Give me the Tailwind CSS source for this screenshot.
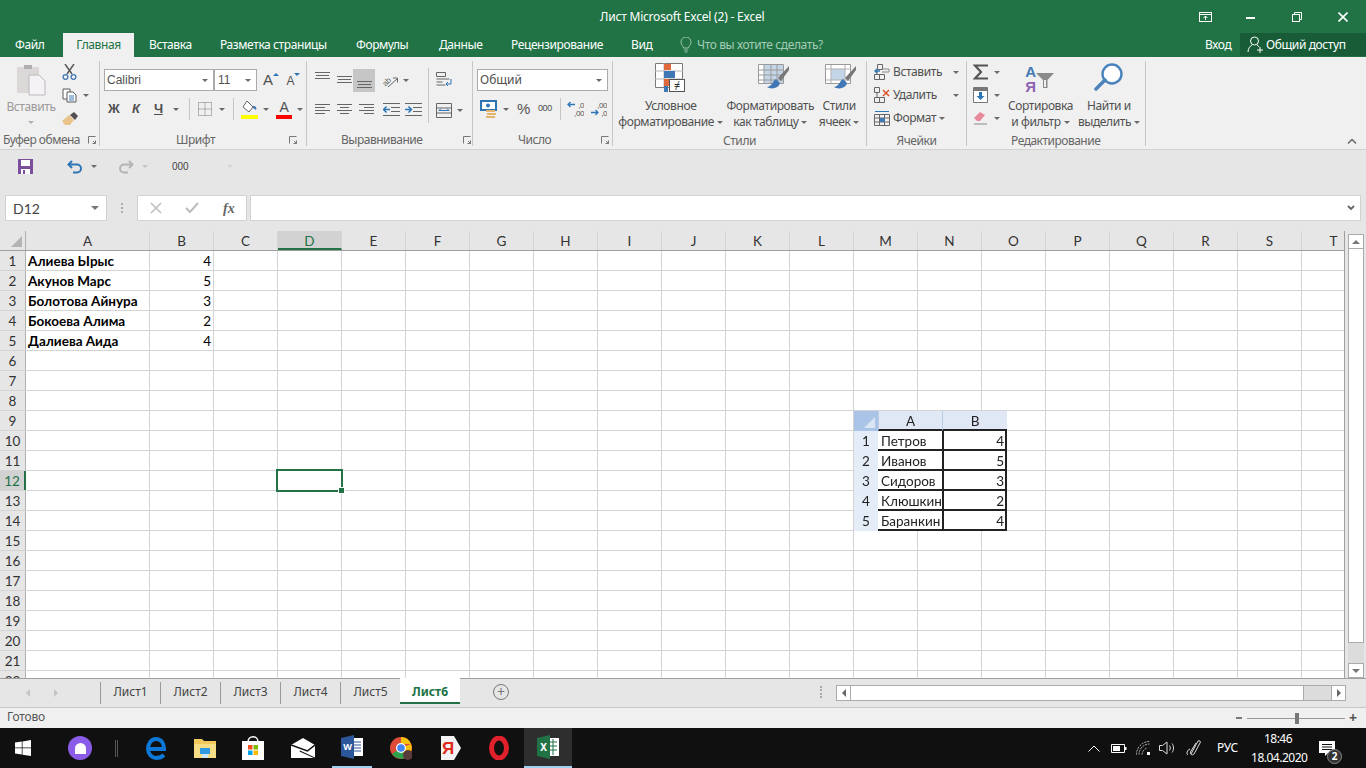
<!DOCTYPE html>
<html lang="ru">
<head>
<meta charset="UTF-8">
<title>Лист Microsoft Excel (2) - Excel</title>
<script src="https://cdn.jsdelivr.net/npm/@tailwindcss/browser@4"></script>
</head>
<body class="w-[1366px] h-[768px] overflow-hidden bg-[#e6e6e6] font-['Noto_Sans',sans-serif] text-[12px] text-[#444]">

<!-- title bar -->
<div class="h-[33px] bg-[#217346] flex items-center text-white relative">
  <div class="w-[1195px] pl-[600px] text-[12px] tracking-[-0.2px]">Лист Microsoft Excel (2) - Excel</div>
  <svg class="w-[16px] h-[12px] ml-[2px]" viewBox="0 0 16 12" fill="none" stroke="#fff"><rect x="2.5" y="1.5" width="12" height="9"/><path d="M2 3.5h13" /><path d="M8.5 9V5M6.5 7l2-2 2 2"/></svg>
  <div class="w-[9px] h-[2px] bg-white ml-[33px] mt-[2px]"></div>
  <svg class="w-[10px] h-[10px] ml-[37px]" viewBox="0 0 10 10" fill="none" stroke="#fff"><rect x="0.5" y="2.5" width="7" height="7"/><path d="M2.5 2.5v-2h7v7h-2"/></svg>
  <svg class="w-[10px] h-[10px] ml-[36px]" viewBox="0 0 10 10" fill="none" stroke="#fff" stroke-width="1.6"><path d="M0.5 0.5l9 9M9.5 0.5l-9 9"/></svg>
</div>

<!-- tabs -->
<div class="h-[24px] bg-[#217346] flex items-stretch text-white text-[12px] tracking-[-0.4px]">
  <span class="ml-[15px] w-[48px] leading-[24px]">Файл</span>
  <span class="w-[71px] bg-[#f0f0f0] text-[#217346] text-center leading-[24px]">Главная</span>
  <span class="ml-[15px] w-[71px] leading-[24px]">Вставка</span>
  <span class="w-[136px] leading-[24px]">Разметка страницы</span>
  <span class="w-[83px] leading-[24px]">Формулы</span>
  <span class="w-[72px] leading-[24px]">Данные</span>
  <span class="w-[120px] leading-[24px]">Рецензирование</span>
  <span class="w-[49px] leading-[24px]">Вид</span>
  <svg class="w-[12px] h-[16px] mt-[4px]" viewBox="0 0 12 16" fill="none" stroke="#9cc4ad"><path d="M3.5 11c0-2-2.500-3-2.500-6a5 5 0 0 1 10 0c0 3-2.500 4-2.500 6z"/><path d="M4 13h4M4.500 15h3"/></svg>
  <span class="ml-[5px] w-[508px] leading-[24px] text-[#a6cbb6]">Что вы хотите сделать?</span>
  <span class="w-[35px] leading-[24px]">Вход</span>
  <div class="w-[126px] bg-[#185c37] flex items-center pl-[7px] gap-[2px] h-[23px]">
    <svg class="w-[17px] h-[17px]" viewBox="0 0 17 17" fill="none" stroke="#fff"><circle cx="7.500" cy="5" r="4"/><path d="M1 16c0-4 2.500-6 4-7M10 9c1 .5 1.500 1 2 2M10 14h6M13 11v6"/></svg>
    <span>Общий доступ</span>
  </div>
</div>

<!-- ribbon -->
<div class="h-[93px] bg-[#f0f0f0] border-b border-[#d2d2d2] flex text-[#505050] tracking-[-0.4px]">

  <!-- clipboard -->
  <div class="w-[100px] h-[85px] mt-[4px] border-r border-[#c6c6c6] flex flex-col pt-px">
    <div class="h-[71px] flex">
      <div class="w-[62px] flex flex-col items-center">
        <svg class="w-[30px] h-[32px] mt-[2px]" viewBox="0 0 30 32"><path d="M1 3h7V1h8v2h7v26H1z" fill="#dcd8d8"/><rect x="8" y="1" width="8" height="4" fill="#b0aeae"/><path d="M13 11h10l6 6v14H13z" fill="#f4f2f4" stroke="#bcb8bc"/></svg>
        <span class="mt-[3px] text-[#9a9a9a] leading-[16px]">Вставить</span>
        <i class="mt-[6px] w-0 h-0 border-x-[3px] border-x-transparent border-t-[3px] border-t-[#b0b0b0]"></i>
      </div>
      <div class="flex flex-col">
        <svg class="w-[15px] h-[16px] mt-[2px]" viewBox="0 0 15 16" fill="none"><path d="M3 0l7 10M12 0L5 10" stroke="#5a5a5a" stroke-width="1.500"/><circle cx="3.500" cy="13" r="2.400" stroke="#3f78b4" stroke-width="1.300"/><circle cx="11.500" cy="13" r="2.400" stroke="#3f78b4" stroke-width="1.300"/></svg>
        <div class="flex items-center mt-[8px]">
          <svg class="w-[16px] h-[15px]" viewBox="0 0 16 15" fill="#fff" stroke="#5a5a5a"><path d="M1 1h7v10H1z"/><path d="M5 4h6l3 3v7H5z"/><path d="M7 8h5M7 10h5M7 12h5" stroke="#3f78b4"/></svg>
          <i class="ml-[5px] w-0 h-0 border-x-[3px] border-x-transparent border-t-[3px] border-t-[#6a6a6a]"></i>
        </div>
        <svg class="w-[17px] h-[14px] mt-[8px]" viewBox="0 0 17 14"><path d="M0 10l7-6 5 5-4 5H3z" fill="#e8c48c"/><path d="M8 4l4-3 4 4-3 4z" fill="#505050"/></svg>
      </div>
    </div>
    <div class="h-[13px] flex items-center pl-[3px] leading-[16px] text-[#666] tracking-[-0.5px]"><span class="w-[85px]">Буфер обмена</span>
      <svg class="w-[8px] h-[8px]" viewBox="0 0 8 8" fill="none" stroke="#777"><path d="M.5 7.500v-7h7M5 5l2.500 2.500M7.500 4.500v3h-3"/></svg>
    </div>
  </div>

  <!-- font -->
  <div class="w-[207px] h-[85px] mt-[4px] border-r border-[#c6c6c6] flex flex-col pt-px">
    <div class="h-[71px] pl-[4px] pt-[7px]">
      <div class="flex items-center h-[22px]">
        <div class="w-[110px] h-[22px] bg-white border border-[#ababab] flex items-center justify-between pl-[2px] pr-[5px] font-['Liberation_Sans'] tracking-normal"><span>Calibri</span><i class="w-0 h-0 border-x-[3px] border-x-transparent border-t-[3px] border-t-[#6a6a6a]"></i></div>
        <div class="w-[43px] h-[22px] bg-white border border-[#ababab] flex items-center justify-between pl-[3px] pr-[5px] font-['Liberation_Sans'] tracking-normal"><span>11</span><i class="w-0 h-0 border-x-[3px] border-x-transparent border-t-[3px] border-t-[#6a6a6a]"></i></div>
        <span class="ml-[6px] text-[15px] leading-[22px] font-['Liberation_Sans'] text-[#505050]">A</span><i class="mb-[11px] w-0 h-0 border-x-[3px] border-x-transparent border-b-[3px] border-b-[#2e75b6]"></i>
        <span class="ml-[8px] text-[12px] leading-[22px] mt-[2px] font-['Liberation_Sans'] text-[#505050]">A</span><i class="mb-[11px] w-0 h-0 border-x-[3px] border-x-transparent border-t-[3px] border-t-[#2e75b6]"></i>
      </div>
      <div class="flex items-center h-[24px] mt-[6px] text-[#505050]">
        <b class="ml-[4px] w-[24px] text-[13px] font-['Liberation_Sans']">Ж</b>
        <b class="w-[22px] text-[13px] italic font-['Liberation_Sans']">К</b>
        <b class="w-[19px] text-[13px] font-['Liberation_Sans'] underline">Ч</b>
        <i class="w-0 h-0 border-x-[3px] border-x-transparent border-t-[3px] border-t-[#6a6a6a]"></i>
        <div class="ml-[10px] w-px h-[22px] bg-[#c6c6c6]"></div>
        <svg class="ml-[8px] w-[14px] h-[14px]" viewBox="0 0 14 14" fill="none" stroke="#777" stroke-dasharray="1 1"><path d="M.5.500h13v13H.500zM7 .5v13M.5 7h13"/></svg>
        <i class="ml-[7px] w-0 h-0 border-x-[3px] border-x-transparent border-t-[3px] border-t-[#6a6a6a]"></i>
        <div class="ml-[8px] w-px h-[22px] bg-[#c6c6c6]"></div>
        <svg class="ml-[7px] w-[17px] h-[19px]" viewBox="0 0 17 19"><path d="M6 1l6 6-4 5-6-5z" fill="#fff" stroke="#666"/><path d="M12 6c3 0 4 2 3 4l-3-2z" fill="#3f78b4"/><rect y="15" width="17" height="4" fill="#ffff00"/></svg>
        <i class="ml-[5px] w-0 h-0 border-x-[3px] border-x-transparent border-t-[3px] border-t-[#6a6a6a]"></i>
        <div class="ml-[7px] w-[16px] flex flex-col items-center"><b class="text-[14px] leading-[15px] font-normal font-['Liberation_Sans']">A</b><span class="w-[16px] h-[4px] bg-[#ff0000]"></span></div>
        <i class="ml-[5px] w-0 h-0 border-x-[3px] border-x-transparent border-t-[3px] border-t-[#6a6a6a]"></i>
      </div>
    </div>
    <div class="h-[13px] flex items-center leading-[16px] text-[#666] tracking-[-0.5px]"><span class="ml-[76px] w-[113px]">Шрифт</span>
      <svg class="w-[8px] h-[8px]" viewBox="0 0 8 8" fill="none" stroke="#777"><path d="M.5 7.500v-7h7M5 5l2.500 2.500M7.500 4.500v3h-3"/></svg>
    </div>
  </div>

  <!-- alignment -->
  <div class="w-[166px] h-[85px] mt-[4px] border-r border-[#c6c6c6] flex flex-col pt-px">
    <div class="h-[71px] flex">
      <div class="w-[121px] pl-[8px] pt-[7px]">
        <div class="flex items-center h-[23px]">
          <svg class="w-[15px] h-[23px]" viewBox="0 0 15 23" stroke="#666"><path d="M0 3.500h15M1 6.500h13M0 9.500h15"/></svg>
          <svg class="ml-[7px] w-[15px] h-[23px]" viewBox="0 0 15 23" stroke="#666"><path d="M0 7.500h15M1 10.500h13M0 13.500h15"/></svg>
          <div class="ml-[1px] w-[22px] h-[23px] bg-[#c6c6c6] flex justify-center"><svg class="w-[15px] h-[23px]" viewBox="0 0 15 23" stroke="#666"><path d="M0 12.500h15M1 15.500h13M0 18.500h15"/></svg></div>
          <svg class="ml-[6px] w-[18px] h-[16px]" viewBox="0 0 18 16" fill="none" stroke="#666"><text x="1" y="11" font-size="8" font-family="Liberation Sans" fill="#666" stroke="none" transform="rotate(-45 6 8)">ab</text><path d="M7 14l9-8M12 5h4.500v4.500"/></svg>
          <i class="ml-[4px] w-0 h-0 border-x-[3px] border-x-transparent border-t-[3px] border-t-[#6a6a6a]"></i>
        </div>
        <div class="flex items-center h-[17px] mt-[9px]">
          <svg class="w-[15px] h-[12px]" viewBox="0 0 15 12" stroke="#666"><path d="M0 .5h15M0 3.500h10M0 6.500h15M0 9.500h10"/></svg>
          <svg class="ml-[7px] w-[15px] h-[12px]" viewBox="0 0 15 12" stroke="#666"><path d="M0 .5h15M3 3.500h9M0 6.500h15M3 9.500h9"/></svg>
          <svg class="ml-[7px] w-[15px] h-[12px]" viewBox="0 0 15 12" stroke="#666"><path d="M0 .5h15M5 3.500h10M0 6.500h15M5 9.500h10"/></svg>
          <svg class="ml-[9px] w-[17px] h-[14px]" viewBox="0 0 17 14" fill="none"><path d="M0 .5h17M8 4.500h9M8 8.500h9M0 12.500h17" stroke="#666"/><path d="M1 6.500h6M3.500 3.500l-3 3 3 3" stroke="#2e75b6" stroke-width="1.500"/></svg>
          <svg class="ml-[5px] w-[17px] h-[14px]" viewBox="0 0 17 14" fill="none"><path d="M0 .5h17M8 4.500h9M8 8.500h9M0 12.500h17" stroke="#666"/><path d="M0 6.500h6M3.500 3.500l3 3-3 3" stroke="#2e75b6" stroke-width="1.500"/></svg>
        </div>
      </div>
      <div class="w-px h-[55px] bg-[#c6c6c6] mt-[6px]"></div>
      <div class="pl-[7px]">
        <svg class="mt-[10px] w-[16px] h-[15px]" viewBox="0 0 16 15" fill="none" stroke="#666"><path d="M.5 .5h9v4h-9zM.5 7h13M.5 10h6M.5 13h9"/><path d="M15 7v5H10M12 10l-2 2 2 2" stroke="#2e75b6"/></svg>
        <div class="flex items-center mt-[16px]">
          <svg class="w-[16px] h-[15px]" viewBox="0 0 16 15" fill="none" stroke="#666"><path d="M.5.500h15v14H.500zM.5 5h15M.5 10h15"/><path d="M3 7.500h10M3 7.500l2-2M13 7.500l-2-2" stroke="#2e75b6"/></svg>
          <i class="ml-[5px] w-0 h-0 border-x-[3px] border-x-transparent border-t-[3px] border-t-[#6a6a6a]"></i>
        </div>
      </div>
    </div>
    <div class="h-[13px] flex items-center leading-[16px] text-[#666] tracking-[-0.5px]"><span class="ml-[34px] w-[122px]">Выравнивание</span>
      <svg class="w-[8px] h-[8px]" viewBox="0 0 8 8" fill="none" stroke="#777"><path d="M.5 7.500v-7h7M5 5l2.500 2.500M7.500 4.500v3h-3"/></svg>
    </div>
  </div>

  <!-- number -->
  <div class="w-[140px] h-[85px] mt-[4px] border-r border-[#c6c6c6] flex flex-col pt-px">
    <div class="h-[71px] pl-[4px] pt-[7px]">
      <div class="w-[131px] h-[22px] bg-white border border-[#ababab] flex items-center justify-between pl-[2px] pr-[5px] tracking-normal"><span>Общий</span><i class="w-0 h-0 border-x-[3px] border-x-transparent border-t-[3px] border-t-[#6a6a6a]"></i></div>
      <div class="flex items-center h-[24px] mt-[6px]">
        <svg class="ml-[3px] w-[18px] h-[18px]" viewBox="0 0 18 18"><rect x="1" y="1" width="15" height="9" fill="#fff" stroke="#2e75b6" stroke-width="2"/><circle cx="8" cy="5.500" r="2" fill="#2e75b6"/><rect x="6" y="10" width="9" height="2" fill="#e5b56e"/><rect x="7" y="13" width="9" height="2" fill="#e5b56e"/><rect x="6" y="16" width="9" height="2" fill="#e5b56e"/></svg>
        <i class="ml-[5px] w-0 h-0 border-x-[3px] border-x-transparent border-t-[3px] border-t-[#6a6a6a]"></i>
        <span class="ml-[8px] w-[21px] text-[15px] font-['Liberation_Sans']">%</span>
        <span class="w-[22px] text-[9px] font-['Liberation_Sans']">000</span>
        <div class="w-px h-[22px] bg-[#c6c6c6]"></div>
        <svg class="ml-[6px] w-[17px] h-[16px]" viewBox="0 0 17 16" fill="none"><text x="17" y="7" text-anchor="end" font-size="8" font-family="Liberation Sans" fill="#555">,0</text><text x="17" y="15" text-anchor="end" font-size="8" font-family="Liberation Sans" fill="#555">,00</text><path d="M8 3.500H1M3.500 1L1 3.500 3.500 6" stroke="#2e75b6" stroke-width="1.300"/></svg>
        <svg class="ml-[6px] w-[17px] h-[16px]" viewBox="0 0 17 16" fill="none"><text x="17" y="7" text-anchor="end" font-size="8" font-family="Liberation Sans" fill="#555">,00</text><text x="17" y="15" text-anchor="end" font-size="8" font-family="Liberation Sans" fill="#555">,0</text><path d="M1 11.500h7M5.500 9L8 11.500 5.500 14" stroke="#2e75b6" stroke-width="1.300"/></svg>
      </div>
    </div>
    <div class="h-[13px] flex items-center leading-[16px] text-[#666] tracking-[-0.5px]"><span class="ml-[45px] w-[83px]">Число</span>
      <svg class="w-[8px] h-[8px]" viewBox="0 0 8 8" fill="none" stroke="#777"><path d="M.5 7.500v-7h7M5 5l2.500 2.500M7.500 4.500v3h-3"/></svg>
    </div>
  </div>

  <!-- styles -->
  <div class="w-[254px] h-[85px] mt-[4px] border-r border-[#c6c6c6] flex flex-col pt-px">
    <div class="h-[71px] flex leading-[16px] text-[#505050] whitespace-nowrap">
      <div class="w-[116px] flex flex-col items-center">
        <svg class="w-[31px] h-[31px] shrink-0" viewBox="0 0 31 31"><path d="M.5 1.500h27v24H.500z" fill="#fff" stroke="#7a7a7a"/><path d="M9 1v24M0 9h28M0 17h28" stroke="#b5b5b5"/><rect x="9" y="2" width="7" height="6" fill="#e06a3e"/><rect x="9" y="9" width="11" height="7" fill="#3f78b4"/><rect x="9" y="17" width="9" height="7" fill="#e06a3e"/><rect x="9" y="24" width="4" height="6" fill="#3f78b4"/><rect x="14.500" y="17.500" width="15" height="12" fill="#fff" stroke="#555"/><text x="22" y="27" font-size="11" text-anchor="middle" fill="#333">≠</text></svg>
        <span class="mt-[5px]">Условное</span>
        <span>форматирование<i class="inline-block ml-[3px] mb-[2px] w-0 h-0 border-x-[3px] border-x-transparent border-t-[3px] border-t-[#6a6a6a]"></i></span>
      </div>
      <div class="w-[84px] flex flex-col items-center">
        <svg class="ml-[6px] w-[31px] h-[31px] shrink-0" viewBox="0 0 31 31"><path d="M.5 2.500h25v19H.500z" fill="#fff" stroke="#9a9a9a"/><rect x="6" y="3" width="19" height="18" fill="#c5d5e8"/><path d="M6 3v18M13 3v18M19 3v18M1 8h24M1 13h24M1 18h24" stroke="#9a9a9a"/><path d="M31 4L20 16l3 3L31 8z" fill="#777"/><path d="M18 17c-4 2-3 7-9 8 5 3 12 1 13-4z" fill="#3f78b4"/></svg>
        <span class="mt-[5px]">Форматировать</span>
        <span>как таблицу<i class="inline-block ml-[3px] mb-[2px] w-0 h-0 border-x-[3px] border-x-transparent border-t-[3px] border-t-[#6a6a6a]"></i></span>
      </div>
      <div class="w-[54px] flex flex-col items-center">
        <svg class="ml-[3px] w-[31px] h-[31px] shrink-0" viewBox="0 0 31 31"><path d="M.5 2.500h25v19H.500z" fill="#fff" stroke="#9a9a9a"/><rect x="6" y="7" width="14" height="11" fill="#c5d5e8"/><path d="M1 7h24M1 18h24M6 3v18M20 3v18" stroke="#b0b0b0"/><path d="M31 4L20 16l3 3L31 8z" fill="#777"/><path d="M18 17c-4 2-3 7-9 8 5 3 12 1 13-4z" fill="#3f78b4"/></svg>
        <span class="mt-[5px]">Стили</span>
        <span>ячеек<i class="inline-block ml-[3px] mb-[2px] w-0 h-0 border-x-[3px] border-x-transparent border-t-[3px] border-t-[#6a6a6a]"></i></span>
      </div>
    </div>
    <div class="h-[13px] text-center leading-[16px] text-[#666]">Стили</div>
  </div>

  <!-- cells -->
  <div class="w-[100px] h-[85px] mt-[4px] border-r border-[#c6c6c6] flex flex-col pt-px">
    <div class="h-[71px] pl-[7px] pt-[2px] flex flex-col gap-[7px] text-[#505050]">
      <div class="h-[16px] flex items-center">
        <svg class="w-[16px] h-[16px]" viewBox="0 0 16 16" fill="none" stroke="#666"><path d="M3.500.500h5v5h-5zM.5 10.500h5v5h-5zM5.500 10.500h5v5h-5zM3 5.500v5"/><path d="M8 5h7v3H8" stroke="#888"/><path d="M6 7h-5M3 5L1 7l2 2" stroke="#2e75b6" stroke-width="1.300"/></svg>
        <span class="ml-[3px] w-[57px]">Вставить</span><i class="ml-[3px] w-0 h-0 border-x-[3px] border-x-transparent border-t-[3px] border-t-[#6a6a6a]"></i>
      </div>
      <div class="h-[16px] flex items-center">
        <svg class="w-[16px] h-[16px]" viewBox="0 0 16 16" fill="none" stroke="#666"><path d="M.5.500h5v5h-5zM.5 10.500h5v5h-5zM5.500 10.500h5v5h-5zM3 5.500v5"/><path d="M9 3l6 6M15 3L9 9" stroke="#d9552c" stroke-width="1.500"/></svg>
        <span class="ml-[3px] w-[53px]">Удалить</span><i class="ml-[7px] w-0 h-0 border-x-[3px] border-x-transparent border-t-[3px] border-t-[#6a6a6a]"></i>
      </div>
      <div class="h-[16px] flex items-center">
        <svg class="w-[16px] h-[16px]" viewBox="0 0 16 16" fill="none" stroke="#666"><path d="M.5 4.500h15v11H.500zM.5 8h15M.5 12h15M5.500 4.500v11M10.500 4.500v11"/><rect x="6" y="8" width="5" height="4" fill="#3f78b4" stroke="none"/><path d="M1 1.500h14" stroke="#2e75b6"/></svg>
        <span class="ml-[3px]">Формат</span><i class="ml-[3px] w-0 h-0 border-x-[3px] border-x-transparent border-t-[3px] border-t-[#6a6a6a]"></i>
      </div>
    </div>
    <div class="h-[13px] text-center leading-[16px] text-[#666]">Ячейки</div>
  </div>

  <!-- editing -->
  <div class="w-[179px] h-[85px] mt-[4px] border-r border-[#c6c6c6] flex flex-col pt-px">
    <div class="h-[71px] flex text-[#505050] leading-[16px] whitespace-nowrap">
      <div class="w-[38px] pl-[6px] pt-[2px] flex flex-col gap-[7px]">
        <div class="h-[16px] flex items-center"><svg class="w-[16px] h-[16px]" viewBox="0 0 16 16" fill="none" stroke="#555" stroke-width="2.200"><path d="M15 1.500H2l6 6.500-6 6.500h13"/></svg><i class="ml-[5px] w-0 h-0 border-x-[3px] border-x-transparent border-t-[3px] border-t-[#6a6a6a]"></i></div>
        <div class="h-[16px] flex items-center"><svg class="w-[15px] h-[16px]" viewBox="0 0 15 16"><path d="M.5.500h14v15H.500z" fill="#fff" stroke="#777"/><rect x="1" y="1" width="13" height="3" fill="#777"/><path d="M6 5h3v4h2.500l-4 4-4-4H6z" fill="#2e75b6"/></svg><i class="ml-[6px] w-0 h-0 border-x-[3px] border-x-transparent border-t-[3px] border-t-[#6a6a6a]"></i></div>
        <div class="h-[16px] flex items-center"><svg class="w-[15px] h-[14px]" viewBox="0 0 15 14"><path d="M1 7l6-6 5 3-5 6H4z" fill="#e98a9c"/><path d="M1 13h13" stroke="#888"/></svg><i class="ml-[6px] w-0 h-0 border-x-[3px] border-x-transparent border-t-[3px] border-t-[#6a6a6a]"></i></div>
      </div>
      <div class="w-[71px] flex flex-col items-center">
        <div class="h-[31px] flex items-start shrink-0 pr-[2px]">
          <div class="flex flex-col items-center font-['Liberation_Sans'] font-bold text-[15px] leading-[14.5px] pt-[3px]"><span class="text-[#3f78b4]">A</span><span class="text-[#8e63b5]">Я</span></div>
          <svg class="w-[18px] h-[16px] mt-[11px]" viewBox="0 0 18 16"><path d="M0 0h18l-6.500 7v8H7V7z" fill="#8a8a8a"/><path d="M8 7h2v7H8z" fill="#f0f0f0"/></svg>
        </div>
        <span class="mt-[5px]">Сортировка</span>
        <span>и фильтр<i class="inline-block ml-[3px] mb-[2px] w-0 h-0 border-x-[3px] border-x-transparent border-t-[3px] border-t-[#6a6a6a]"></i></span>
      </div>
      <div class="w-[62px] ml-[2px] flex flex-col items-center">
        <svg class="w-[30px] h-[31px] shrink-0" viewBox="0 0 30 31" fill="none"><circle cx="18" cy="12" r="9.500" fill="#fff" stroke="#4a82bb" stroke-width="2.400"/><path d="M2 27l9-9" stroke="#4a82bb" stroke-width="3.500" stroke-linecap="round"/></svg>
        <span class="mt-[5px]">Найти и</span>
        <span>выделить<i class="inline-block ml-[3px] mb-[2px] w-0 h-0 border-x-[3px] border-x-transparent border-t-[3px] border-t-[#6a6a6a]"></i></span>
      </div>
    </div>
    <div class="h-[13px] pl-[44px] leading-[16px] text-[#666] tracking-[-0.5px]">Редактирование</div>
  </div>
  <div class="flex-1 flex justify-end items-end pb-[5px] pr-[9px]">
    <svg class="w-[10px] h-[6px]" viewBox="0 0 10 6" fill="none" stroke="#666" stroke-width="1.500"><path d="M1 5.500l4-4 4 4"/></svg>
  </div>
</div>

<!-- quick access -->
<div class="h-[45px] flex items-center bg-[#e6e6e6] pb-[12px]">
  <svg class="ml-[18px] w-[15px] h-[15px]" viewBox="0 0 15 15"><rect width="15" height="15" fill="#7c4f9e"/><rect x="3" y="1" width="9" height="6" fill="#fff"/><rect x="3" y="10" width="9" height="5" fill="#fff"/><rect x="5" y="11" width="2" height="4" fill="#7c4f9e"/></svg>
  <svg class="ml-[34px] w-[16px] h-[14px]" viewBox="0 0 16 14" fill="none" stroke="#2e75b6" stroke-width="2"><path d="M5 1L1.500 4.500 5 8"/><path d="M2 4.500h8a4 4 0 0 1 0 8H6"/></svg>
  <i class="ml-[8px] w-0 h-0 border-x-[3px] border-x-transparent border-t-[3px] border-t-[#6a6a6a]"></i>
  <svg class="ml-[21px] w-[16px] h-[14px]" viewBox="0 0 16 14" fill="none" stroke="#b4b4b4" stroke-width="2"><path d="M11 1l3.500 3.500L11 8"/><path d="M14 4.500H6a4 4 0 0 0 0 8h4"/></svg>
  <i class="ml-[8px] w-0 h-0 border-x-[3px] border-x-transparent border-t-[3px] border-t-[#c4c4c4]"></i>
  <span class="ml-[24px] w-[55px] text-[10px] font-['Liberation_Sans'] text-[#444]">000</span>
  <i class="w-0 h-0 border-x-[3px] border-x-transparent border-t-[3px] border-t-[#d4d4d4]"></i>
</div>

<!-- formula bar -->
<div class="h-[26px] flex pl-[5px]">
  <div class="w-[102px] bg-white border border-[#d2d2d2] flex items-center justify-between pl-[7px] pr-[7px] font-['Lato'] text-[14px] text-[#444]"><span>D12</span><i class="w-0 h-0 border-x-[4px] border-x-transparent border-t-[4px] border-t-[#777]"></i></div>
  <div class="w-[30px] flex items-center justify-center"><div class="w-[2px] h-[10px] border-l-2 border-dotted border-[#aaa]"></div></div>
  <div class="w-[110px] bg-white border border-[#d2d2d2] flex items-center pl-[12px]">
    <svg class="w-[12px] h-[12px]" viewBox="0 0 12 12" stroke="#bdbdbd" stroke-width="1.500"><path d="M1 1l10 10M11 1L1 11"/></svg>
    <svg class="ml-[23px] w-[14px] h-[12px]" viewBox="0 0 14 12" fill="none" stroke="#bdbdbd" stroke-width="2"><path d="M1 6l4 4 8-9"/></svg>
    <span class="ml-[24px] font-['Liberation_Serif'] italic font-bold text-[14px] text-[#666]">fx</span>
  </div>
  <div class="ml-[3px] w-[1111px] bg-white border border-[#d2d2d2] flex items-center justify-end pr-[5px]">
    <svg class="w-[8px] h-[6px]" viewBox="0 0 8 6" fill="none" stroke="#666" stroke-width="1.800"><path d="M1 1l3 3 3-3"/></svg>
  </div>
</div>
<div class="h-[10px]"></div>

<!-- sheet -->
<div class="h-[447px] flex relative">
  <div id="grid" class="w-[1345px] h-[447px] overflow-hidden border-r border-[#9f9f9f] bg-white font-['Lato','Liberation_Sans',sans-serif] text-[13.5px] text-black"></div>

  <!-- pasted picture -->
  <div class="absolute left-[854px] top-[180px] w-[153px] h-[120px] bg-white grid grid-cols-[24px_64px_65px] grid-rows-[20px_repeat(5,20px)] font-['Lato','Liberation_Sans',sans-serif] text-[13.5px] text-[#222] blur-[0.3px]">
    <div class="bg-[#a9c4e6] flex items-end justify-end p-[3px]"><i class="w-0 h-0 border-l-[11px] border-l-transparent border-b-[11px] border-b-[#dce6f2]"></i></div>
    <div class="bg-[#dfe8f4] border-l border-b-2 border-l-[#b8cce4] border-b-[#222] text-center leading-[20px]">A</div>
    <div class="bg-[#dfe8f4] border-l border-b-2 border-l-[#b8cce4] border-b-[#222] text-center leading-[20px]">B</div>
    <div class="bg-[#e4ecf7] text-center leading-[21px]">1</div><div class="border-b-2 border-[#222] pl-[3px] leading-[20px]">Петров</div><div class="border-l-2 border-r-2 border-b-2 border-[#222] text-right pr-[1px] leading-[20px]">4</div>
    <div class="bg-[#e4ecf7] text-center leading-[21px]">2</div><div class="border-b-2 border-[#222] pl-[3px] leading-[20px]">Иванов</div><div class="border-l-2 border-r-2 border-b-2 border-[#222] text-right pr-[1px] leading-[20px]">5</div>
    <div class="bg-[#e4ecf7] text-center leading-[21px]">3</div><div class="border-b-2 border-[#222] pl-[3px] leading-[20px]">Сидоров</div><div class="border-l-2 border-r-2 border-b-2 border-[#222] text-right pr-[1px] leading-[20px]">3</div>
    <div class="bg-[#e4ecf7] text-center leading-[21px]">4</div><div class="border-b-2 border-[#222] pl-[3px] leading-[20px] whitespace-nowrap">Клюшкин</div><div class="border-l-2 border-r-2 border-b-2 border-[#222] text-right pr-[1px] leading-[20px]">2</div>
    <div class="bg-[#e4ecf7] text-center leading-[21px]">5</div><div class="border-b-2 border-[#222] pl-[3px] leading-[20px] whitespace-nowrap">Баранкин</div><div class="border-l-2 border-r-2 border-b-2 border-[#222] text-right pr-[1px] leading-[20px]">4</div>
  </div>

  <!-- selected cell D12 -->
  <div class="absolute left-[276px] top-[238px] w-[67px] h-[23px] border-2 border-[#217346]"><span class="absolute right-[-4px] bottom-[-4px] w-[7px] h-[7px] bg-[#217346] border border-white"></span></div>

  <!-- vertical scrollbar -->
  <div class="ml-[3px] w-[16px] flex flex-col">
    <div class="h-[15px] mt-[3px] bg-white border border-[#ababab] flex items-center justify-center"><i class="w-0 h-0 border-x-[4px] border-x-transparent border-b-[4px] border-b-[#777]"></i></div>
    <div class="h-[394px] bg-white border-x border-b border-[#ababab]"></div>
    <div class="flex-1 bg-[#dcdcdc]"></div>
    <div class="h-[15px] bg-white border border-[#ababab] flex items-center justify-center"><i class="w-0 h-0 border-x-[4px] border-x-transparent border-t-[4px] border-t-[#777]"></i></div>
  </div>
</div>

<!-- sheet tabs -->
<div class="h-[29px] border-t border-[#9f9f9f] flex bg-[#e6e6e6] text-[12px] text-[#444]">
  <div class="w-[100px] flex items-center pl-[26px] gap-[24px]">
    <i class="w-0 h-0 border-y-[4px] border-y-transparent border-r-[4px] border-r-[#c4c4c4]"></i>
    <i class="w-0 h-0 border-y-[4px] border-y-transparent border-l-[4px] border-l-[#c4c4c4]"></i>
  </div>
  <div class="flex items-start h-[24px]">
    <div class="w-[60px] h-[22px] mt-[3px] border-l border-[#9a9a9a] text-center leading-[20px]">Лист1</div>
    <div class="w-[60px] h-[22px] mt-[3px] border-l border-[#9a9a9a] text-center leading-[20px]">Лист2</div>
    <div class="w-[60px] h-[22px] mt-[3px] border-l border-[#9a9a9a] text-center leading-[20px]">Лист3</div>
    <div class="w-[60px] h-[22px] mt-[3px] border-l border-[#9a9a9a] text-center leading-[20px]">Лист4</div>
    <div class="w-[60px] h-[22px] mt-[3px] border-l border-[#9a9a9a] text-center leading-[20px]">Лист5</div>
    <div class="w-[60px] h-[26px] bg-white border-b-2 border-[#217346] text-center leading-[27px] font-bold text-[#217346] mt-[-1px]">Лист6</div>
  </div>
  <div class="ml-[33px] mt-[5px] w-[16px] h-[16px] rounded-full border border-[#777] flex items-center justify-center text-[14px] leading-none text-[#777]">+</div>
  <div class="ml-[311px] mt-[7px] w-[2px] h-[12px] border-l-2 border-dotted border-[#aaa]"></div>
  <div class="ml-[14px] mt-[6px] w-[510px] h-[16px] flex border border-[#ababab] bg-[#dcdcdc]">
    <div class="w-[14px] bg-white border-r border-[#ababab] flex items-center justify-center"><i class="w-0 h-0 border-y-[4px] border-y-transparent border-r-[4px] border-r-[#666]"></i></div>
    <div class="w-[453px] bg-white border-r border-[#ababab]"></div>
    <div class="flex-1"></div>
    <div class="w-[14px] bg-white border-l border-[#ababab] flex items-center justify-center"><i class="w-0 h-0 border-y-[4px] border-y-transparent border-l-[4px] border-l-[#666]"></i></div>
  </div>
</div>

<!-- status bar -->
<div class="h-[21px] bg-[#f0f0f0] border-t border-[#c6c6c6] flex items-center text-[#555]">
  <span class="ml-[7px] w-[1229px] text-[12px] tracking-[-0.2px] pb-[2px]">Готово</span>
  <div class="w-[6px] h-[2px] bg-[#777]"></div>
  <div class="ml-[5px] w-[98px] h-px bg-[#999] flex items-center"><span class="ml-[48px] w-[4px] h-[11px] bg-[#777]"></span></div>
  <span class="ml-[4px] text-[14px] leading-none font-bold">+</span>
</div>

<!-- taskbar -->
<div class="h-[40px] bg-[#101010] flex items-center text-white relative font-['Noto_Sans']">
  <svg class="ml-[15px] w-[16px] h-[16px]" viewBox="0 0 16 16" fill="#fff"><path d="M0 2.500L6.800 1.500v6H0zM7.500 1.400L16 0v7.500H7.500zM0 8.300h6.800v6.200L0 13.500zM7.500 8.300H16V16l-8.500-1.300z"/></svg>
  <div class="ml-[37px] w-[24px] h-[24px] rounded-full bg-[#8b5ce8] flex items-center justify-center"><span class="w-[11px] h-[11px] bg-white rounded-t-full rounded-b-[4px]"></span></div>
  <div class="ml-[23px] w-[3px] h-[17px] border-x border-[#555]"></div>
  <svg class="ml-[27px] w-[22px] h-[24px]" viewBox="0 0 22 24" fill="none" stroke="#0d78d8" stroke-width="4"><path d="M3 13h16c0-6-3-10-8-10S3 8 3 13s4 9 8 9c3 0 6-1 8-3"/></svg>
  <svg class="ml-[27px] w-[22px] h-[20px]" viewBox="0 0 22 20"><path d="M0 1h8l2 2h12v17H0z" fill="#f3c95b"/><rect y="6" width="22" height="14" fill="#f7dd85"/><rect x="6" y="10" width="10" height="6" fill="#2e9ae0"/><rect x="8" y="16" width="6" height="4" fill="#cfe8f7"/></svg>
  <svg class="ml-[26px] w-[22px] h-[24px]" viewBox="0 0 22 24"><rect y="5" width="22" height="19" fill="#fff"/><path d="M6 6c0-7 10-7 10 0" fill="none" stroke="#fff" stroke-width="1.500"/><rect x="6" y="9" width="4.500" height="4.500" fill="#f25022"/><rect x="11.500" y="9" width="4.500" height="4.500" fill="#7fba00"/><rect x="6" y="14.500" width="4.500" height="4.500" fill="#00a4ef"/><rect x="11.500" y="14.500" width="4.500" height="4.500" fill="#ffb900"/></svg>
  <svg class="ml-[27px] w-[24px] h-[20px]" viewBox="0 0 22 20" preserveAspectRatio="none"><path d="M0 7l11-7 11 7v13H0z" fill="#fff"/><path d="M0 7l15 6 7-6" fill="none" stroke="#101010" stroke-width="1.500"/><path d="M8 13L22 20" stroke="#101010"/></svg>
  <div class="ml-[17px] w-[40px] h-[40px] border-b-[2px] border-[#9fd0f2] flex items-center justify-center">
    <svg class="w-[22px] h-[24px]" viewBox="0 0 22 24"><rect x="8" y="3" width="14" height="18" fill="#fff"/><path d="M12 7h8M12 10h8M12 13h8M12 16h8" stroke="#2b579a"/><path d="M0 3l13-3v24L0 21z" fill="#2b579a"/><text x="6.500" y="15" font-size="9" font-weight="700" fill="#fff" text-anchor="middle">W</text></svg>
  </div>
  <svg class="ml-[18px] w-[22px] h-[24px]" viewBox="0 0 22 24"><circle cx="11" cy="12" r="11" fill="#dd4b39"/><path d="M11 12L2 18A11 11 0 0 0 16 21.500z" fill="#2ba24c"/><path d="M11 1a11 11 0 0 1 10 7H11z" fill="#f4c20d"/><path d="M21 8a11 11 0 0 1-5 13.500L11 12z" fill="#f4c20d"/><circle cx="11" cy="12" r="5" fill="#fff"/><circle cx="11" cy="12" r="3.800" fill="#4285f4"/><circle cx="18" cy="19" r="5" fill="#5a3a3a"/></svg>
  <svg class="ml-[27px] w-[22px] h-[24px]" viewBox="0 0 22 24"><path d="M2 0h13l7 12-7 12H2z" fill="#f3f3f3"/><text x="9" y="18" font-size="17" font-weight="700" fill="#e0291c" text-anchor="middle" font-family="Liberation Sans">Я</text></svg>
  <svg class="ml-[28px] w-[20px] h-[24px]" viewBox="0 0 20 24"><ellipse cx="10" cy="12" rx="7.500" ry="10" fill="none" stroke="#e0202a" stroke-width="5"/></svg>
  <div class="ml-[15px] w-[48px] h-[40px] bg-[#2e2e2e] border-b-[2px] border-[#9fd0f2] flex items-center justify-center">
    <svg class="w-[22px] h-[24px]" viewBox="0 0 22 24"><rect x="8" y="3" width="14" height="18" fill="#fff"/><path d="M12 7h8M12 11h8M12 15h8M16 4v16" stroke="#217346"/><path d="M0 3l13-3v24L0 21z" fill="#217346"/><text x="6.500" y="16" font-size="10" font-weight="700" fill="#fff" text-anchor="middle">X</text></svg>
  </div>
  <svg class="ml-[516px] w-[12px] h-[7px]" viewBox="0 0 12 7" fill="none" stroke="#fff"><path d="M.5 6.500L6 1l5.500 5.500"/></svg>
  <svg class="ml-[11px] w-[16px] h-[9px]" viewBox="0 0 16 9"><path d="M.5.500h13v8H.500z" fill="none" stroke="#fff"/><rect x="2" y="2" width="7" height="5" fill="#fff"/><rect x="14" y="3" width="1.500" height="3" fill="#fff"/></svg>
  <svg class="ml-[9px] w-[14px] h-[14px]" viewBox="0 0 14 14" fill="none" stroke="#bbb"><path d="M.5 13.500a13 13 0 0 1 13-13M3 13.500a10.500 10.500 0 0 1 10.500-10.500M6 13.500A7.500 7.500 0 0 1 11 7" stroke-dasharray="2 1"/><rect x="11" y="11" width="3" height="3" fill="#fff" stroke="none"/></svg>
  <svg class="ml-[9px] w-[17px] h-[14px]" viewBox="0 0 17 14" fill="none" stroke="#ddd"><path d="M.5 4.500h3L8 1v12L3.500 9.500h-3zM10.500 4.500c1 1.500 1 3.500 0 5M13 2.500c2 2.500 2 6.500 0 9"/></svg>
  <svg class="ml-[10px] w-[16px] h-[18px]" viewBox="0 0 16 18" fill="none" stroke="#ddd"><path d="M5 15L12 2c2-1 3 1 2 2L8 15c-2 2-5 0-3-3l5-8M4 10C1 11 0 15 2 16"/></svg>
  <span class="ml-[15px] text-[12px] tracking-[-0.2px]">РУС</span>
  <div class="ml-[13px] w-[54px] text-center text-[12px] leading-[19px] tracking-[-0.5px] whitespace-nowrap"><div>18:46</div><div>18.04.2020</div></div>
  <div class="ml-[14px] relative">
    <svg class="w-[16px] h-[15px]" viewBox="0 0 16 15"><path d="M0 0h16v12H9l-3 3v-3H0z" fill="#fff"/><path d="M3 3.500h10M3 6h10M3 8.500h10" stroke="#101010"/></svg>
    <span class="absolute left-[8px] top-[8px] w-[15px] h-[15px] rounded-full bg-[#333] border border-[#888] text-[10px] font-bold leading-[13px] text-center">2</span>
  </div>
</div>

<script>
  // ячейки листа
  const data = {
    1: ['Алиева Ырыс', 4],
    2: ['Акунов Марс', 5],
    3: ['Болотова Айнура', 3],
    4: ['Бокоева Алима', 2],
    5: ['Далиева Аида', 4]
  };
  const cols = 'ABCDEFGHIJKLMNOPQRST'.split('');

  function headerRow() {
    let html = '<div class="flex h-[20px] bg-[#e6e6e6] border-b border-[#9f9f9f] text-[#333]">';
    html += '<div class="w-[26px] shrink-0 border-r border-[#b0b0b0] flex items-end justify-end p-[3px]"><i class="w-0 h-0 border-l-[11px] border-l-transparent border-b-[11px] border-b-[#b4b4b4]"></i></div>';
    cols.forEach(c => {
      const width = c === 'A' ? 'w-[124px]' : 'w-[64px]';
      const state = c === 'D' ? 'bg-[#d2d2d2] border-b-2 border-b-[#217346] text-[#217346]' : '';
      html += `<div class="${width} shrink-0 border-r border-[#d4d4d4] text-center leading-[20px] ${state}">${c}</div>`;
    });
    return html + '</div>';
  }

  function sheetRow(n) {
    const head = n === 12 ? 'bg-[#d2d2d2] border-r-2 border-r-[#217346] text-[#217346]' : 'bg-[#e6e6e6] border-r border-r-[#b0b0b0] text-[#333]';
    let html = `<div class="flex h-[20px] border-b border-[#d4d4d4]"><div class="w-[26px] shrink-0 text-center leading-[20px] ${head}">${n}</div>`;
    cols.forEach((c, i) => {
      const width = c === 'A' ? 'w-[124px]' : 'w-[64px]';
      let inner = '';
      if (data[n] && i === 0) inner = `<b class="pl-[2px] whitespace-nowrap">${data[n][0]}</b>`;
      if (data[n] && i === 1) inner = `<span class="block text-right pr-[2px]">${data[n][1]}</span>`;
      html += `<div class="${width} shrink-0 border-r border-[#d4d4d4] leading-[20px]">${inner}</div>`;
    });
    return html + '</div>';
  }

  let rows = headerRow();
  for (let n = 1; n <= 22; n++) rows += sheetRow(n);
  document.getElementById('grid').innerHTML = rows;
</script>
</body>
</html>
